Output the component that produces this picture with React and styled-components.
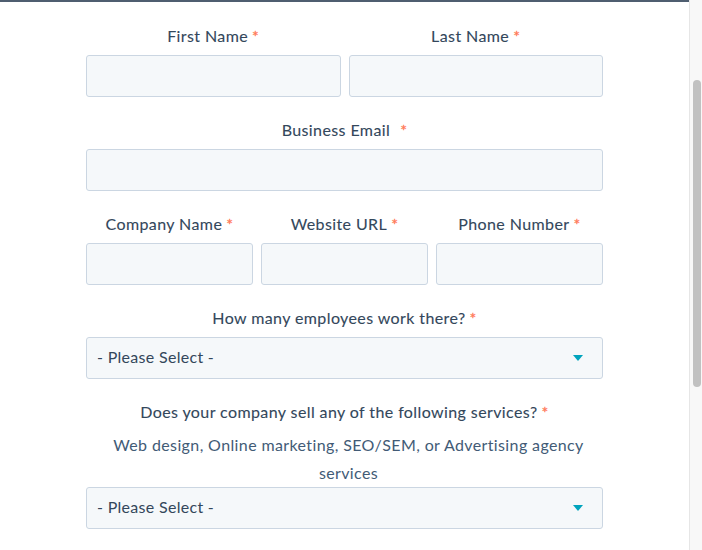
import React from 'react';
import styled, { createGlobalStyle } from 'styled-components';

const GlobalStyle = createGlobalStyle`
	html, body {
		margin: 0;
		padding: 0;
		background: #fff;
		overflow: hidden;
	}
	body {
		font-family: 'Lato', 'Open Sans', sans-serif;
		color: #33475b;
	}
`;

const Page = styled.div`
	display: flex;
	height: 550px;
	width: 702px;
`;

const Main = styled.main`
	flex: 1;
	border-top: 2px solid #4f5e70;
	display: flex;
	justify-content: center;
	padding-top: 24px;
`;

const Track = styled.div`
	width: 12px;
	border-left: 1px solid #e6e6e6;
	background: #f8f8f8;
	display: flex;
	justify-content: center;
`;

const Thumb = styled.div`
	width: 8px;
	height: 307px;
	margin-top: 80px;
	margin-left: 1px;
	border-radius: 4px;
	background: #c1c1c1;
`;

const Form = styled.form`
	width: 517px;
	display: flex;
	flex-direction: column;
`;

const Row = styled.div`
	display: grid;
	grid-template-columns: repeat(${p => p.cols || 1}, 1fr);
	column-gap: 8px;
`;

const Field = styled.div`
	display: flex;
	flex-direction: column;
	margin-bottom: 23px;
`;

const Label = styled.label`
	display: block;
	text-align: center;
	font-size: 16px;
	line-height: 20px;
	color: #33475b;
	margin-bottom: 9px;
	letter-spacing: 0.4px;
	-webkit-text-stroke: 0.1px #33475b;
`;

const Required = styled.span`
	color: #ff7a59;
	margin-left: ${p => (p.wide ? '10px' : '4px')};
	-webkit-text-stroke: 0.3px #ff7a59;
`;

const Description = styled.p`
	margin: 0;
	text-align: center;
	font-size: 16px;
	line-height: 28px;
	color: #425b76;
	padding: 0 4px 0 12px;
	letter-spacing: 0.38px;
`;

const Input = styled.input`
	box-sizing: border-box;
	height: 42px;
	width: 100%;
	border: 1px solid #cbd6e2;
	border-radius: 3px;
	background: #f5f8fa;
	outline: none;
`;

const Select = styled.div`
	box-sizing: border-box;
	height: 42px;
	border: 1px solid #cbd6e2;
	border-radius: 3px;
	background: #f5f8fa;
	display: flex;
	align-items: center;
	justify-content: space-between;
	padding: 0 19px 3px 10px;
	font-size: 16px;
	letter-spacing: 0.3px;
	color: #33475b;
`;

const Caret = styled.span`
	width: 0;
	height: 0;
	border-left: 5px solid transparent;
	border-right: 5px solid transparent;
	border-top: 6px solid #00a4bd;
	margin-top: 3px;
`;

const TextField = ({ label, wide }) => (
	<Field>
		<Label>
			{label}
			<Required wide={wide}>*</Required>
		</Label>
		<Input type="text" />
	</Field>
);

const SelectField = ({ label, description }) => (
	<Field>
		<Label>
			{label}
			<Required>*</Required>
		</Label>
		{description && <Description>{description}</Description>}
		<Select>
			<span>- Please Select -</span>
			<Caret />
		</Select>
	</Field>
);

export default function App() {
	return (
		<>
			<GlobalStyle />
			<Page>
				<Main>
					<Form>
						<Row cols={2}>
							<TextField label="First Name" />
							<TextField label="Last Name" />
						</Row>
						<TextField label="Business Email" wide />
						<Row cols={3}>
							<TextField label="Company Name" />
							<TextField label="Website URL" />
							<TextField label="Phone Number" />
						</Row>
						<SelectField label="How many employees work there?" />
						<SelectField
							label="Does your company sell any of the following services?"
							description="Web design, Online marketing, SEO/SEM, or Advertising agency services"
						/>
					</Form>
				</Main>
				<Track>
					<Thumb />
				</Track>
			</Page>
		</>
	);
}
